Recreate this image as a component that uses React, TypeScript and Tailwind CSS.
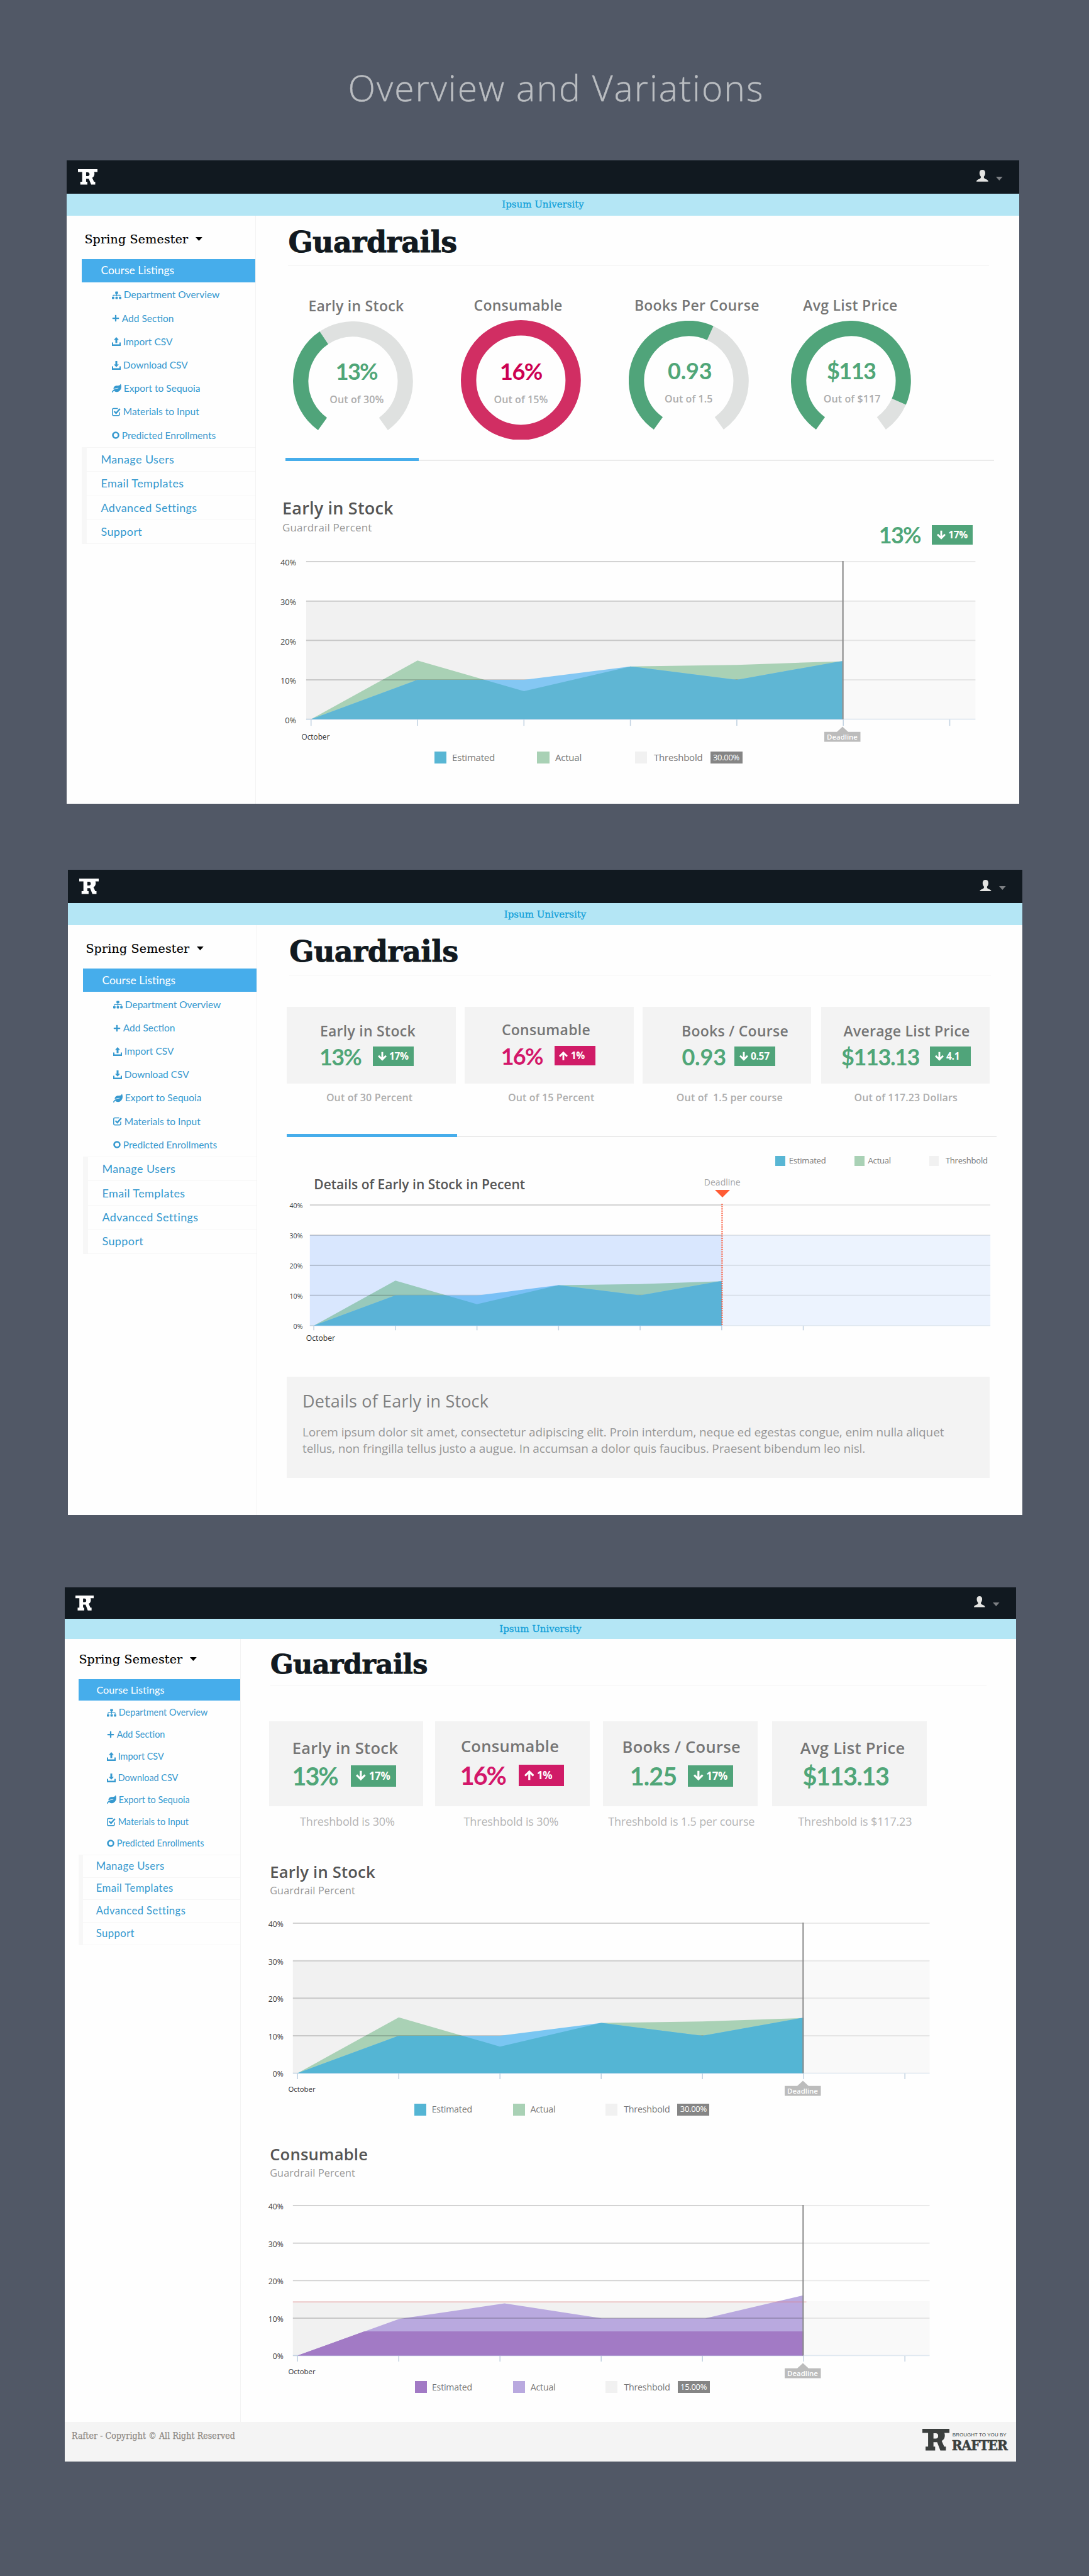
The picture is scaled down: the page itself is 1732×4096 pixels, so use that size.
import type { ReactNode } from "react";
import { FaSitemap, FaPlus, FaLeaf } from "react-icons/fa";

type Pt = [number, number];

/* ---------- icons ---------- */

function RafterMark({ className }: { className: string }) {
  return (
    <svg viewBox="0 0 161 130" preserveAspectRatio="none" className={className} fill="currentColor">
      <path
        fillRule="evenodd"
        d="M0 0H161V24H131C136 36 134 54 126 63Q122 68 115 72L130 106H140V130H107L88 80H66V106H76V130H19V106H34V24H0ZM66 26V58H82Q94 56 94 42T82 26Z"
      />
    </svg>
  );
}

function PersonIcon({ className }: { className: string }) {
  return (
    <svg viewBox="0 0 18 18" className={className} fill="#e4e4e2">
      <path d="M9 0C11.8 0 13.4 1.9 13.4 4.8C13.4 7.4 12.4 9.2 11.4 10.4C11.1 11.9 11.4 12.8 13 13.6C15.5 14.8 17.8 15.2 18 18H0C.2 15.2 2.5 14.8 5 13.6C6.6 12.8 6.9 11.9 6.6 10.4C5.6 9.2 4.6 7.4 4.6 4.8C4.6 1.9 6.2 0 9 0Z" />
    </svg>
  );
}

function Caret({ className }: { className: string }) {
  return (
    <svg viewBox="0 0 10 6" preserveAspectRatio="none" className={className} fill="currentColor">
      <path d="M0 0H10L5 6Z" />
    </svg>
  );
}

function TrayIcon({ up }: { up?: boolean }) {
  return (
    <svg viewBox="0 0 14 14" className="size-[14px]" fill="currentColor">
      <path d="M0 8.6H2V11.6H12V8.6H14V14H0Z" />
      {up ? <path d="M7 0L11 4.4H8.5V9.6H5.5V4.4H3Z" /> : <path d="M7 9.8L3 5.4H5.5V0H8.5V5.4H11Z" />}
    </svg>
  );
}

function CheckIcon() {
  return (
    <svg viewBox="0 0 14 14" className="size-[14px]" fill="none" stroke="currentColor">
      <path d="M12 7.5V10.8Q12 12.8 10 12.8H2.8Q.8 12.8 .8 10.8V3.4Q.8 1.4 2.8 1.4H9.5" strokeWidth="1.5" />
      <path d="M3.6 6L6.6 9L12.8 2" strokeWidth="2.4" />
    </svg>
  );
}

function RingIcon() {
  return (
    <svg viewBox="0 0 12 12" className="size-[12px]" fill="none" stroke="currentColor">
      <circle cx="6" cy="6" r="4.5" strokeWidth="2.6" />
    </svg>
  );
}

function Arrow({ up, className }: { up?: boolean; className: string }) {
  return (
    <svg viewBox="0 0 14 14" className={className} fill="none" stroke="#fff" strokeWidth="2.9">
      {up ? <path d="M7 14V2.4M1 8L7 2L13 8" /> : <path d="M7 0V11.6M1 6L7 12L13 6" />}
    </svg>
  );
}

/* ---------- shell ---------- */

const subItems: [string, ReactNode][] = [
  ["Department Overview", <FaSitemap className="size-[15px]" />],
  ["Add Section", <FaPlus className="size-[12px]" />],
  ["Import CSV", <TrayIcon up />],
  ["Download CSV", <TrayIcon />],
  ["Export to Sequoia", <FaLeaf className="size-[15px]" />],
  ["Materials to Input", <CheckIcon />],
  ["Predicted Enrollments", <RingIcon />],
];
const mainItems = ["Manage Users", "Email Templates", "Advanced Settings", "Support"];

function Header({ compact }: { compact?: boolean }) {
  return (
    <>
      <header
        className={`flex items-center justify-between bg-[#111920] pr-[26.5px] ${
          compact ? "h-[50px] pl-[16.5px]" : "h-[53.6px] pl-[17.6px]"
        }`}
      >
        <RafterMark className={compact ? "h-[23.7px] w-[29.5px] text-white" : "h-[24.6px] w-[31.6px] text-white"} />
        <div className="flex items-center">
          <PersonIcon className={compact ? "mb-[3px] size-[17.6px]" : "mb-[3px] size-[18.8px]"} />
          <Caret className="mt-[5px] ml-[12px] h-[6px] w-[10.6px] text-[#7d8084]" />
        </div>
      </header>
      <div
        className={`flex items-center justify-center bg-[#b4e6f5] font-['DejaVu_Serif',serif] text-[15px] text-[#109fd9] [-webkit-text-stroke:0.3px] ${
          compact ? "h-[32.2px]" : "h-[35px]"
        }`}
      >
        Ipsum University
      </div>
    </>
  );
}

function Sidebar({ compact }: { compact?: boolean }) {
  return (
    <aside
      className={`shrink-0 border-r-[1.5px] border-[#f3f3f3] text-[#3699cf] font-['Lato',sans-serif] ${
        compact ? "w-[280px] pl-[22.4px]" : "w-[301px] pl-[24.4px]"
      }`}
    >
      <div
        className={`flex items-center font-['DejaVu_Serif',serif] text-[19px] tracking-[0.2px] text-black [-webkit-text-stroke:0.2px] ${
          compact ? "h-[64.3px]" : "h-[68.6px] pt-[5px] pl-[4px]"
        }`}
      >
        <span className="w-[176.4px]">Spring Semester</span>
        <Caret className="h-[6px] w-[10.8px]" />
      </div>
      <nav>
        <div
          className={`flex items-center bg-[#46adeb] text-white ${
            compact ? "h-[34.2px] pl-[28px] text-[16.2px]" : "h-[37.4px] pl-[30px] text-[17.5px]"
          }`}
        >
          Course Listings
        </div>
        <ul className={compact ? "pt-[1.4px] pl-[44.3px] text-[14.4px]" : "pt-[1.4px] pl-[47.4px] text-[15.5px]"}>
          {subItems.map(([label, icon]) => (
            <li key={label} className={`flex items-center gap-[4px] ${compact ? "h-[34.7px]" : "h-[37.2px]"}`}>
              {icon}
              <span className="whitespace-nowrap">{label}</span>
            </li>
          ))}
        </ul>
        <ul
          className={`border-b-[1.5px] border-l-[#f7f7f7] border-b-[#f6f6f6] tracking-[0.4px] ${
            compact ? "border-l-[7.6px] text-[16.7px]" : "border-l-[8px] text-[18px]"
          }`}
        >
          {mainItems.map((label) => (
            <li
              key={label}
              className={`flex items-center border-t-[1.5px] border-[#f6f6f6] ${
                compact ? "h-[35.9px] pl-[20.4px]" : "h-[38.4px] pl-[22px]"
              }`}
            >
              {label}
            </li>
          ))}
        </ul>
      </nav>
    </aside>
  );
}

function PageTitle({ className }: { className: string }) {
  return (
    <h1
      className={`flex items-center border-b-[1.5px] border-[#f4f4f4] font-['DejaVu_Serif',serif] font-bold text-[#111920] [-webkit-text-stroke:0.9px] ${className}`}
    >
      Guardrails
    </h1>
  );
}

function TabLine({ className, bar }: { className: string; bar: string }) {
  return (
    <div className={`flex h-[4.9px] items-end ${className}`}>
      <div className={`h-full bg-[#46adeb] ${bar}`} />
      <div className="h-[1.6px] flex-1 bg-[#ebebeb]" />
    </div>
  );
}

/* ---------- gauges ---------- */

const GREEN = "#50a47a";

function arc(from: number, to: number) {
  const p = (deg: number) => {
    const a = (deg * Math.PI) / 180;
    return `${95.4 + 83.2 * Math.sin(a)} ${95.4 - 83.2 * Math.cos(a)}`;
  };
  return `M${p(from)}A83.2 83.2 0 ${to - from > 180 ? 1 : 0} 1 ${p(to)}`;
}

function Gauge(p: {
  title: string;
  value: string;
  note: string;
  split?: number;
  className?: string;
  titleClass: string;
  valueClass: string;
  noteClass: string;
}) {
  return (
    <div className={`w-[190.8px] shrink-0 ${p.className ?? ""}`}>
      <h3
        className={`h-[30px] text-[23px] leading-[30px] font-semibold tracking-[0.27px] whitespace-nowrap text-[#757575] ${p.titleClass}`}
      >
        {p.title}
      </h3>
      <div className="relative mt-[10px] h-[190.8px]">
        <svg viewBox="0 0 190.8 190.8" className="size-full" fill="none" strokeWidth="24.4">
          {p.split === undefined ? (
            <circle cx="95.4" cy="95.4" r="83.2" stroke="#d12e63" />
          ) : (
            <>
              <path d={arc(p.split, 144.4)} stroke="#dfe1e0" />
              <path d={arc(-144.4, p.split)} stroke={GREEN} />
            </>
          )}
        </svg>
        <div className="absolute inset-0 flex flex-col items-center whitespace-nowrap">
          <span
            className={`mt-[58.5px] h-[40px] font-['Lato',sans-serif] text-[36px] leading-[40px] font-bold ${p.valueClass}`}
          >
            {p.value}
          </span>
          <span className={`mt-[13px] text-[16px] leading-[24px] font-semibold tracking-[0.1px] text-[#adadad] ${p.noteClass}`}>
            {p.note}
          </span>
        </div>
      </div>
    </div>
  );
}

/* ---------- stat cards ---------- */

function Badge({ up, large, children }: { up?: boolean; large?: boolean; children: ReactNode }) {
  return (
    <span
      className={`flex shrink-0 items-center text-white font-bold ${
        large
          ? "h-[34px] w-[72px] gap-[4.6px] pl-[8.6px] text-[17px] tracking-[-0.3px]"
          : "h-[31px] w-[65px] gap-[4.2px] pl-[7.8px] text-[15.5px] tracking-[-0.3px]"
      } ${up ? "bg-[#d01b67]" : "bg-[#50a47a]"}`}
    >
      <Arrow up={up} className={large ? "h-[17px] w-[15.6px]" : "h-[15.4px] w-[14px]"} />
      {children}
    </span>
  );
}

function StatCard(p: {
  title: string;
  value: string;
  note: string;
  badge?: string;
  up?: boolean;
  large?: boolean;
  className?: string;
  titleClass: string;
  valueClass: string;
  noteClass: string;
}) {
  return (
    <div className={`shrink-0 whitespace-nowrap ${p.large ? "w-[245.8px]" : "w-[268.2px]"} ${p.className ?? ""}`}>
      <div className={`bg-[#f3f3f3] ${p.large ? "h-[135.2px] pt-[24px]" : "h-[121.3px] pt-[22px]"}`}>
        <h3
          className={`font-semibold text-[#757575] ${
            p.large ? "h-[36px] text-[25.5px] leading-[36px] tracking-[0.3px]" : "h-[32px] text-[23px] leading-[32px] tracking-[0.27px]"
          } ${p.titleClass}`}
        >
          {p.title}
        </h3>
        <div className={`flex items-center ${p.large ? "mt-[5px] h-[44px]" : "mt-[4.5px] h-[40px]"}`}>
          <span
            className={`shrink-0 font-['Lato',sans-serif] font-bold ${
              p.large ? "text-[39.5px] leading-[44px]" : "text-[36px] leading-[40px]"
            } ${p.up ? "text-[#d3176a]" : "text-[#50a678]"} ${p.valueClass}`}
          >
            {p.value}
          </span>
          {p.badge && (
            <Badge up={p.up} large={p.large}>
              {p.badge}
            </Badge>
          )}
        </div>
      </div>
      <p
        className={`leading-[24px] whitespace-pre ${
          p.large ? "mt-[12px] text-[18px] text-[#b5b5b5] tracking-[-0.16px]" : "mt-[10.4px] -mb-[0.4px] text-[16px] font-semibold tracking-[0.14px] text-[#adadad]"
        } ${p.noteClass}`}
      >
        {p.note}
      </p>
    </div>
  );
}

/* ---------- charts ---------- */

const estimated: Pt[] = [[0, 0], [1, 10], [2, 10], [3, 13.4], [4, 10], [5, 14.8]];
const actual: Pt[] = [[0, 0], [1, 14.9], [2, 7.1], [3, 13.4], [4, 13.8], [5, 14.7]];
const estimatedFlat: Pt[] = [[0, 0], [0.657, 6.4], [4.995, 6.4]];
const actualConsumable: Pt[] = [[0, 0], [1.004, 9.75], [2.045, 13.9], [3.005, 9.95], [4.03, 9.95], [4.995, 16.05]];

function Chart(p: {
  id: string;
  className: string;
  width: number;
  height: number;
  left: number;
  right: number;
  bottom: number;
  first: number;
  step: number;
  deadline: number;
  labelX: number;
  labelSize: number;
  est: Pt[];
  act: Pt[];
  colors: { est: string; act: string; both: string; zone: string; zoneLater: string };
  threshold: number;
  thresholdLine?: boolean;
  dotted?: boolean;
  tick: number;
  month: [number, number, number];
}) {
  const top = 8;
  const y = (v: number) => p.bottom - ((p.bottom - top) * v) / 40;
  const x = (i: number) => Math.min(p.first + p.step * i, p.deadline);
  const area = (d: Pt[]) =>
    "M" + d.map(([i, v]) => `${x(i)} ${y(v)}`).join("L") + `L${x(d[d.length - 1][0])} ${p.bottom}L${x(0)} ${p.bottom}Z`;
  const zoneTop = y(p.threshold);
  return (
    <svg
      viewBox={`0 0 ${p.width} ${p.height}`}
      width={p.width}
      height={p.height}
      className={`block font-['Open_Sans',sans-serif] font-medium ${p.className}`}
    >
      <clipPath id={p.id}>
        <path d={area(p.act)} />
      </clipPath>
      <rect x={p.left} y={zoneTop} width={p.deadline - p.left} height={p.bottom - zoneTop} fill={p.colors.zone} />
      <rect x={p.deadline} y={zoneTop} width={p.right - p.deadline} height={p.bottom - zoneTop} fill={p.colors.zoneLater} />
      <path d={area(p.act)} fill={p.colors.act} />
      {[40, 30, 20, 10].map((v) => (
        <g key={v} strokeWidth="2">
          <path d={`M${p.left} ${y(v)}H${p.deadline}`} stroke="#000" strokeOpacity="0.17" />
          <path d={`M${p.deadline} ${y(v)}H${p.right}`} stroke="#000" strokeOpacity="0.08" />
        </g>
      ))}
      <path d={`M${p.left} ${p.bottom}H${p.deadline}`} stroke="#c3d3e2" strokeWidth="1.6" />
      <path d={`M${p.deadline} ${p.bottom}H${p.right}`} stroke="#dfe8f0" strokeWidth="1.6" />
      <path d={area(p.est)} fill={p.colors.est} />
      <path d={area(p.est)} fill={p.colors.both} clipPath={`url(#${p.id})`} />
      {p.thresholdLine && (
        <path d={`M${p.left} ${zoneTop + 1.2}H${p.deadline + 5}`} stroke="#e87878" strokeOpacity="0.32" strokeWidth="2.2" />
      )}
      {[0, 1, 2, 3, 4, 5, 6].map((i) => (
        <path
          key={i}
          d={`M${p.first + p.step * i} ${p.bottom + 0.5}v${p.tick}`}
          stroke="#c3d3e2"
          strokeWidth="1.6"
        />
      ))}
      {[40, 30, 20, 10, 0].map((v) => (
        <text
          key={v}
          x={p.labelX}
          y={y(v) + 1.6 + p.labelSize * 0.36}
          textAnchor="end"
          fontSize={p.labelSize}
          fill="#404040"
        >
          {v}%
        </text>
      ))}
      <text x={p.month[0]} y={p.month[1]} fontSize={p.month[2]} fill="#333">
        October
      </text>
      {p.dotted ? (
        <path d={`M${p.deadline + 0.5} ${top - 2}V${p.bottom}`} stroke="#fa5130" strokeWidth="2" strokeDasharray="2 1.6" />
      ) : (
        <>
          <path d={`M${p.deadline} ${top - 1}V${p.bottom}`} stroke="#8a8a8a" strokeOpacity="0.7" strokeWidth="3" />
          <path
            d={`M${p.deadline - 0.5} ${p.bottom + 12}l9 8.2h19.5v15.8h-57.5v-15.8h20z`}
            fill="#bcbcbc"
          />
          <text
            x={p.deadline - 1}
            y={p.bottom + 32.4}
            textAnchor="middle"
            fontSize="11.4"
            fontWeight="600"
            fill="#fff"
          >
            Deadline
          </text>
        </>
      )}
    </svg>
  );
}

const blues = { est: "#84c7f3", act: "#a9d1b5", both: "#5fb6d4", zone: "#f1f1f1", zoneLater: "#f9f9f9" };

function Legend(p: {
  className: string;
  swatch: string;
  colors: [string, string, string];
  widths: [string, string];
  chip?: string;
}) {
  return (
    <div className={`flex items-center whitespace-nowrap text-[#777] ${p.className}`}>
      <span className={`flex items-center ${p.widths[0]}`}>
        <i className={`${p.swatch} ${p.colors[0]}`} />
        Estimated
      </span>
      <span className={`flex items-center ${p.widths[1]}`}>
        <i className={`${p.swatch} ${p.colors[1]}`} />
        Actual
      </span>
      <span className="flex items-center">
        <i className={`${p.swatch} ${p.colors[2]} mr-[10.5px]`} />
        Threshbold
      </span>
      {p.chip && (
        <span className="ml-[12px] flex h-full w-[51px] items-center justify-center bg-[#858585] text-[13px] tracking-[-0.3px] text-white">
          {p.chip}
        </span>
      )}
    </div>
  );
}

function SectionHead({ title, className, titleClass }: { title: string; className: string; titleClass: string }) {
  return (
    <div className={`whitespace-nowrap ${className}`}>
      <h2 className={`font-semibold text-[#555] ${titleClass}`}>{title}</h2>
      <p className="leading-[24px] tracking-[0.15px] text-[#979797]">Guardrail Percent</p>
    </div>
  );
}

/* ---------- screens ---------- */

function GaugeScreen() {
  return (
    <section className="ml-[106px] w-[1515px] bg-[#fefefe]">
      <Header />
      <div className="flex h-[935.4px]">
        <Sidebar />
        <main className="flex-1">
          <PageTitle className="ml-[51.4px] h-[80px] w-[1114.6px] pt-[6px] text-[46px] tracking-[-0.55px]" />
          <div className="ml-[59.4px] flex h-[305.1px] pt-[48px]">
            <Gauge title="Early in Stock" value="13%" note="Out of 30%" split={-33.7} titleClass="pl-[24px]" valueClass="pl-[10px] tracking-[-1.7px] text-[#50a678]" noteClass="pl-[11px]" />
            <Gauge title="Consumable" value="16%" note="Out of 15%" className="-mt-[1px] ml-[75.9px]" titleClass="-mb-[1.5px] pl-[20.5px]" valueClass="mt-[61px]! tracking-[-1.5px] text-[#cc0052]" noteClass="" />
            <Gauge title="Books Per Course" value="0.93" note="Out of 1.5" split={24.3} className="ml-[76px]" titleClass="-mt-[1px] mb-[1px] pl-[9px]" valueClass="pl-[4px] tracking-[-0.2px] text-[#50a678]" noteClass="" />
            <Gauge title="Avg List Price" value="$113" note="Out of $117" split={113.6} className="ml-[67.6px]" titleClass="-mt-[1px] mb-[1px] pl-[19px]" valueClass="tracking-[-1.5px] text-[#50a678]" noteClass="pl-[3px]" />
          </div>
          <TabLine className="ml-[46.9px] w-[1126.8px]" bar="w-[211.8px]" />
          <div className="flex h-[151.6px]">
            <SectionHead title="Early in Stock" className="pt-[58px] pl-[42px] text-[17px]" titleClass="mb-[2px] text-[27px] leading-[34px] tracking-[0.2px]" />
            <div className="mt-[97.2px] ml-auto flex h-[40px] items-center pr-[73.8px]">
              <span className="w-[84.5px] font-['Lato',sans-serif] text-[36px] leading-[40px] font-bold tracking-[-1.7px] text-[#50a678]">13%</span>
              <Badge>17%</Badge>
            </div>
          </div>
          <Chart id="c1" className="ml-[33px]" width={1130} height={300} left={46.9} right={1111.4} bottom={258.6} first={54.7} step={169.3} deadline={900.5} labelX={31.2} labelSize={12.8} est={estimated} act={actual} colors={blues} threshold={30} tick={10} month={[39.5, 290.5, 11.8]} />
          <Legend className="mt-[10px] ml-[283.7px] h-[19.8px] text-[15px] tracking-[-0.2px]" swatch="mr-[8.6px] size-[19.8px]" colors={["bg-[#58b6d4]", "bg-[#a9d1b5]", "bg-[#f1f1f1]"]} widths={["w-[163.8px]", "w-[155.2px]"]} chip="30.00%" />
        </main>
      </div>
    </section>
  );
}

function CardScreen() {
  return (
    <section className="mt-[104.3px] ml-[108px] w-[1518px] bg-[#fefefe]">
      <Header />
      <div className="flex h-[937.6px]">
        <Sidebar />
        <main className="flex-1">
          <PageTitle className="ml-[51.2px] h-[80px] w-[1115.7px] pt-[6px] text-[46px] tracking-[-0.55px]" />
          <div className="mt-[50px] ml-[47.4px] flex">
            <StatCard title="Early in Stock" value="13%" badge="17%" note="Out of 30 Percent" titleClass="pl-[52.5px]" valueClass="ml-[51.6px] w-[85px] tracking-[-1.7px]" noteClass="pl-[62.5px]" />
            <StatCard title="Consumable" value="16%" badge="1%" up note="Out of 15 Percent" className="ml-[14.9px]" titleClass="-mt-[2.4px] mb-[6px] pl-[58.5px]" valueClass="ml-[57.2px] w-[85px] tracking-[-1.7px]" noteClass="pl-[68.5px]" />
            <StatCard title="Books / Course" value="0.93" badge="0.57" note="Out of  1.5 per course" className="ml-[14.2px]" titleClass="pl-[62.2px]" valueClass="ml-[62.6px] w-[83.5px] tracking-[-0.2px]" noteClass="pl-[54px]" />
            <StatCard title="Average List Price" value="$113.13" badge="4.1" note="Out of 117.23 Dollars" className="ml-[16px]" titleClass="pl-[35.4px]" valueClass="ml-[32px] w-[141px] tracking-[-1.4px]" noteClass="pl-[52.4px]" />
          </div>
          <TabLine className="mt-[46.2px] ml-[47.4px] w-[1128.3px]" bar="w-[270.8px]" />
          <Legend className="mt-[30px] ml-[824.4px] h-[15.8px] text-[13px] tracking-[-0.2px]" swatch="mr-[5.6px] size-[15.8px]" colors={["bg-[#58b6d4]", "bg-[#a9d1b5]", "bg-[#f1f1f1]"]} widths={["w-[125.8px]", "w-[118.4px]"]} />
          <div className="flex h-[54.8px] whitespace-nowrap">
            <h2 className="mt-[14.2px] ml-[90.3px] w-[338px] text-[21px] leading-[30px] font-semibold text-[#555]">Details of Early in Stock in Pecent</h2>
            <div className="ml-[282.5px] flex w-[58px] flex-col items-center pt-[16px] text-[14px] leading-[20px] text-[#a5a5a5]">
              Deadline
              <Caret className="mt-[2.6px] h-[12px] w-[24px] text-[#ff5c35]" />
            </div>
          </div>
          <Chart id="c2" className="ml-[31px]" width={1150} height={235} left={52.8} right={1135.1} bottom={199.8} first={59.1} step={129.75} deadline={707.9} labelX={41.4} labelSize={10.6} est={estimated} act={actual} colors={{ est: "#79c0f6", act: "#98c9bb", both: "#5ab3d7", zone: "#d9e7fe", zoneLater: "#ecf3fe" }} threshold={30} dotted tick={7} month={[46.8, 224, 12.2]} />
          <article className="mt-[45.6px] ml-[47.4px] h-[161.3px] w-[1117.2px] bg-[#f3f3f3] pt-[20.7px] pl-[24.6px]">
            <h2 className="text-[27px] leading-[36px] font-medium tracking-[0.17px] text-[#808080]">Details of Early in Stock</h2>
            <p className="mt-[18px] text-[19px] leading-[26.4px] tracking-[-0.11px] whitespace-nowrap text-[#979797]">
              Lorem ipsum dolor sit amet, consectetur adipiscing elit. Proin interdum, neque ed egestas congue, enim nulla aliquet
              <br />
              tellus, non fringilla tellus justo a augue. In accumsan a dolor quis faucibus. Praesent bibendum leo nisl.
            </p>
          </article>
        </main>
      </div>
    </section>
  );
}

function DoubleChartScreen() {
  const shared = { width: 1080, height: 285, left: 45.8, right: 1058.5, bottom: 246.5, first: 53.2, step: 161, deadline: 857.5, labelX: 30.8, labelSize: 12.2, tick: 9 };
  const head = "mb-0 text-[25.6px] leading-[34px] tracking-[0.2px]";
  return (
    <section className="mt-[114.8px] ml-[103px] w-[1513px] bg-[#fefefe]">
      <Header compact />
      <div className="flex h-[1245px]">
        <Sidebar compact />
        <main className="flex-1">
          <PageTitle className="ml-[47px] h-[74.6px] w-[1139px] pt-[6px] text-[43px] tracking-[-0.6px]" />
          <div className="mt-[56.4px] ml-[44.5px] flex">
            <StatCard large title="Early in Stock" value="13%" badge="17%" note="Threshbold is 30%" titleClass="pl-[37.2px]" valueClass="ml-[37px] w-[93.4px] tracking-[-2px]" noteClass="pl-[49.5px]" />
            <StatCard large title="Consumable" value="16%" badge="1%" up note="Threshbold is 30%" className="ml-[18.9px]" titleClass="-mt-[3.2px] mb-[7px] pl-[40.7px]" valueClass="ml-[39.6px] w-[93.4px] tracking-[-2px]" noteClass="pl-[45.4px]" />
            <StatCard large title="Books / Course" value="1.25" badge="17%" note="Threshbold is 1.5 per course" className="ml-[21.2px]" titleClass="-mt-[2px] mb-[7px] pl-[30.4px]" valueClass="ml-[42.6px] w-[92.7px] tracking-[-0.9px]" noteClass="pl-[8px]" />
            <StatCard large title="Avg List Price" value="$113.13" note="Threshbold is $117.23" className="ml-[23px]" titleClass="pl-[44.8px]" valueClass="ml-[48.5px] tracking-[-1.4px]" noteClass="pl-[41.4px]" />
          </div>
          <SectionHead title="Early in Stock" className="mt-[51.6px] ml-[46.2px] text-[16.2px]" titleClass={head} />
          <Chart id="c3" className="mt-[31.8px] ml-[37px]" {...shared} est={estimated} act={actual} colors={{ ...blues, est: "#7ac6f2", both: "#54b5d4" }} threshold={30} month={[38.4, 275.8, 11.4]} />
          <Legend className="mt-[10px] ml-[276.3px] h-[19px] text-[14.2px] tracking-[-0.2px]" swatch="mr-[8.4px] size-[19px]" colors={["bg-[#54b5d4]", "bg-[#a9d1b5]", "bg-[#f1f1f1]"]} widths={["w-[156.8px]", "w-[146.6px]"]} chip="30.00%" />
          <SectionHead title="Consumable" className="mt-[45.6px] ml-[46.2px] text-[16.2px]" titleClass={head} />
          <Chart id="c4" className="mt-[31.9px] ml-[37px]" {...shared} est={estimatedFlat} act={actualConsumable} colors={{ est: "#a27ac5", act: "#b9a9df", both: "#a27ac5", zone: "#f1f1f1", zoneLater: "#f9f9f9" }} threshold={14.5} thresholdLine month={[38.4, 275.8, 11.4]} />
          <Legend className="mt-[2.2px] ml-[276.5px] h-[19px] text-[14.2px] tracking-[-0.2px]" swatch="mr-[8.4px] size-[19px]" colors={["bg-[#a27ac5]", "bg-[#b9a9df]", "bg-[#f1f1f1]"]} widths={["w-[156.8px]", "w-[146.6px]"]} chip="15.00%" />
        </main>
      </div>
      <footer className="flex h-[63px] items-start justify-between bg-[#f4f4f4] pl-[11px]">
        <span className="mt-[12.4px] font-['DejaVu_Serif_Condensed','DejaVu_Serif',serif] text-[14px] leading-[20px] tracking-[0.09px] text-[#8f8a85] [-webkit-text-stroke:0.25px]">
          Rafter - Copyright © All Right Reserved
        </span>
        <div className="mt-[11.3px] flex pr-[12.8px] text-[#3b3f3e]">
          <RafterMark className="h-[34.6px] w-[43px]" />
          <div className="ml-[3.4px] w-[89.5px] whitespace-nowrap">
            <div className="pt-[4.6px] pl-[1px] font-['Liberation_Sans',sans-serif] text-[8px] leading-[10px] tracking-[0.05px]">BROUGHT TO YOU BY</div>
            <div className="text-[22.6px] leading-[22px] font-bold tracking-[-1.1px] font-['DejaVu_Serif_Condensed','DejaVu_Serif',serif] [-webkit-text-stroke:0.5px]">RAFTER</div>
          </div>
        </div>
      </footer>
    </section>
  );
}

export default function App() {
  return (
    <div className="h-[4096px] w-[1732px] overflow-hidden bg-[#515866] font-['Open_Sans',sans-serif]">
      <div className="flex h-[254.5px] items-start justify-center pt-[103.6px] pl-[37px] text-[57px] leading-[70px] font-light tracking-[2px] text-[#babdc1] [-webkit-text-stroke:0.4px]">
        Overview and Variations
      </div>
      <GaugeScreen />
      <CardScreen />
      <DoubleChartScreen />
    </div>
  );
}
